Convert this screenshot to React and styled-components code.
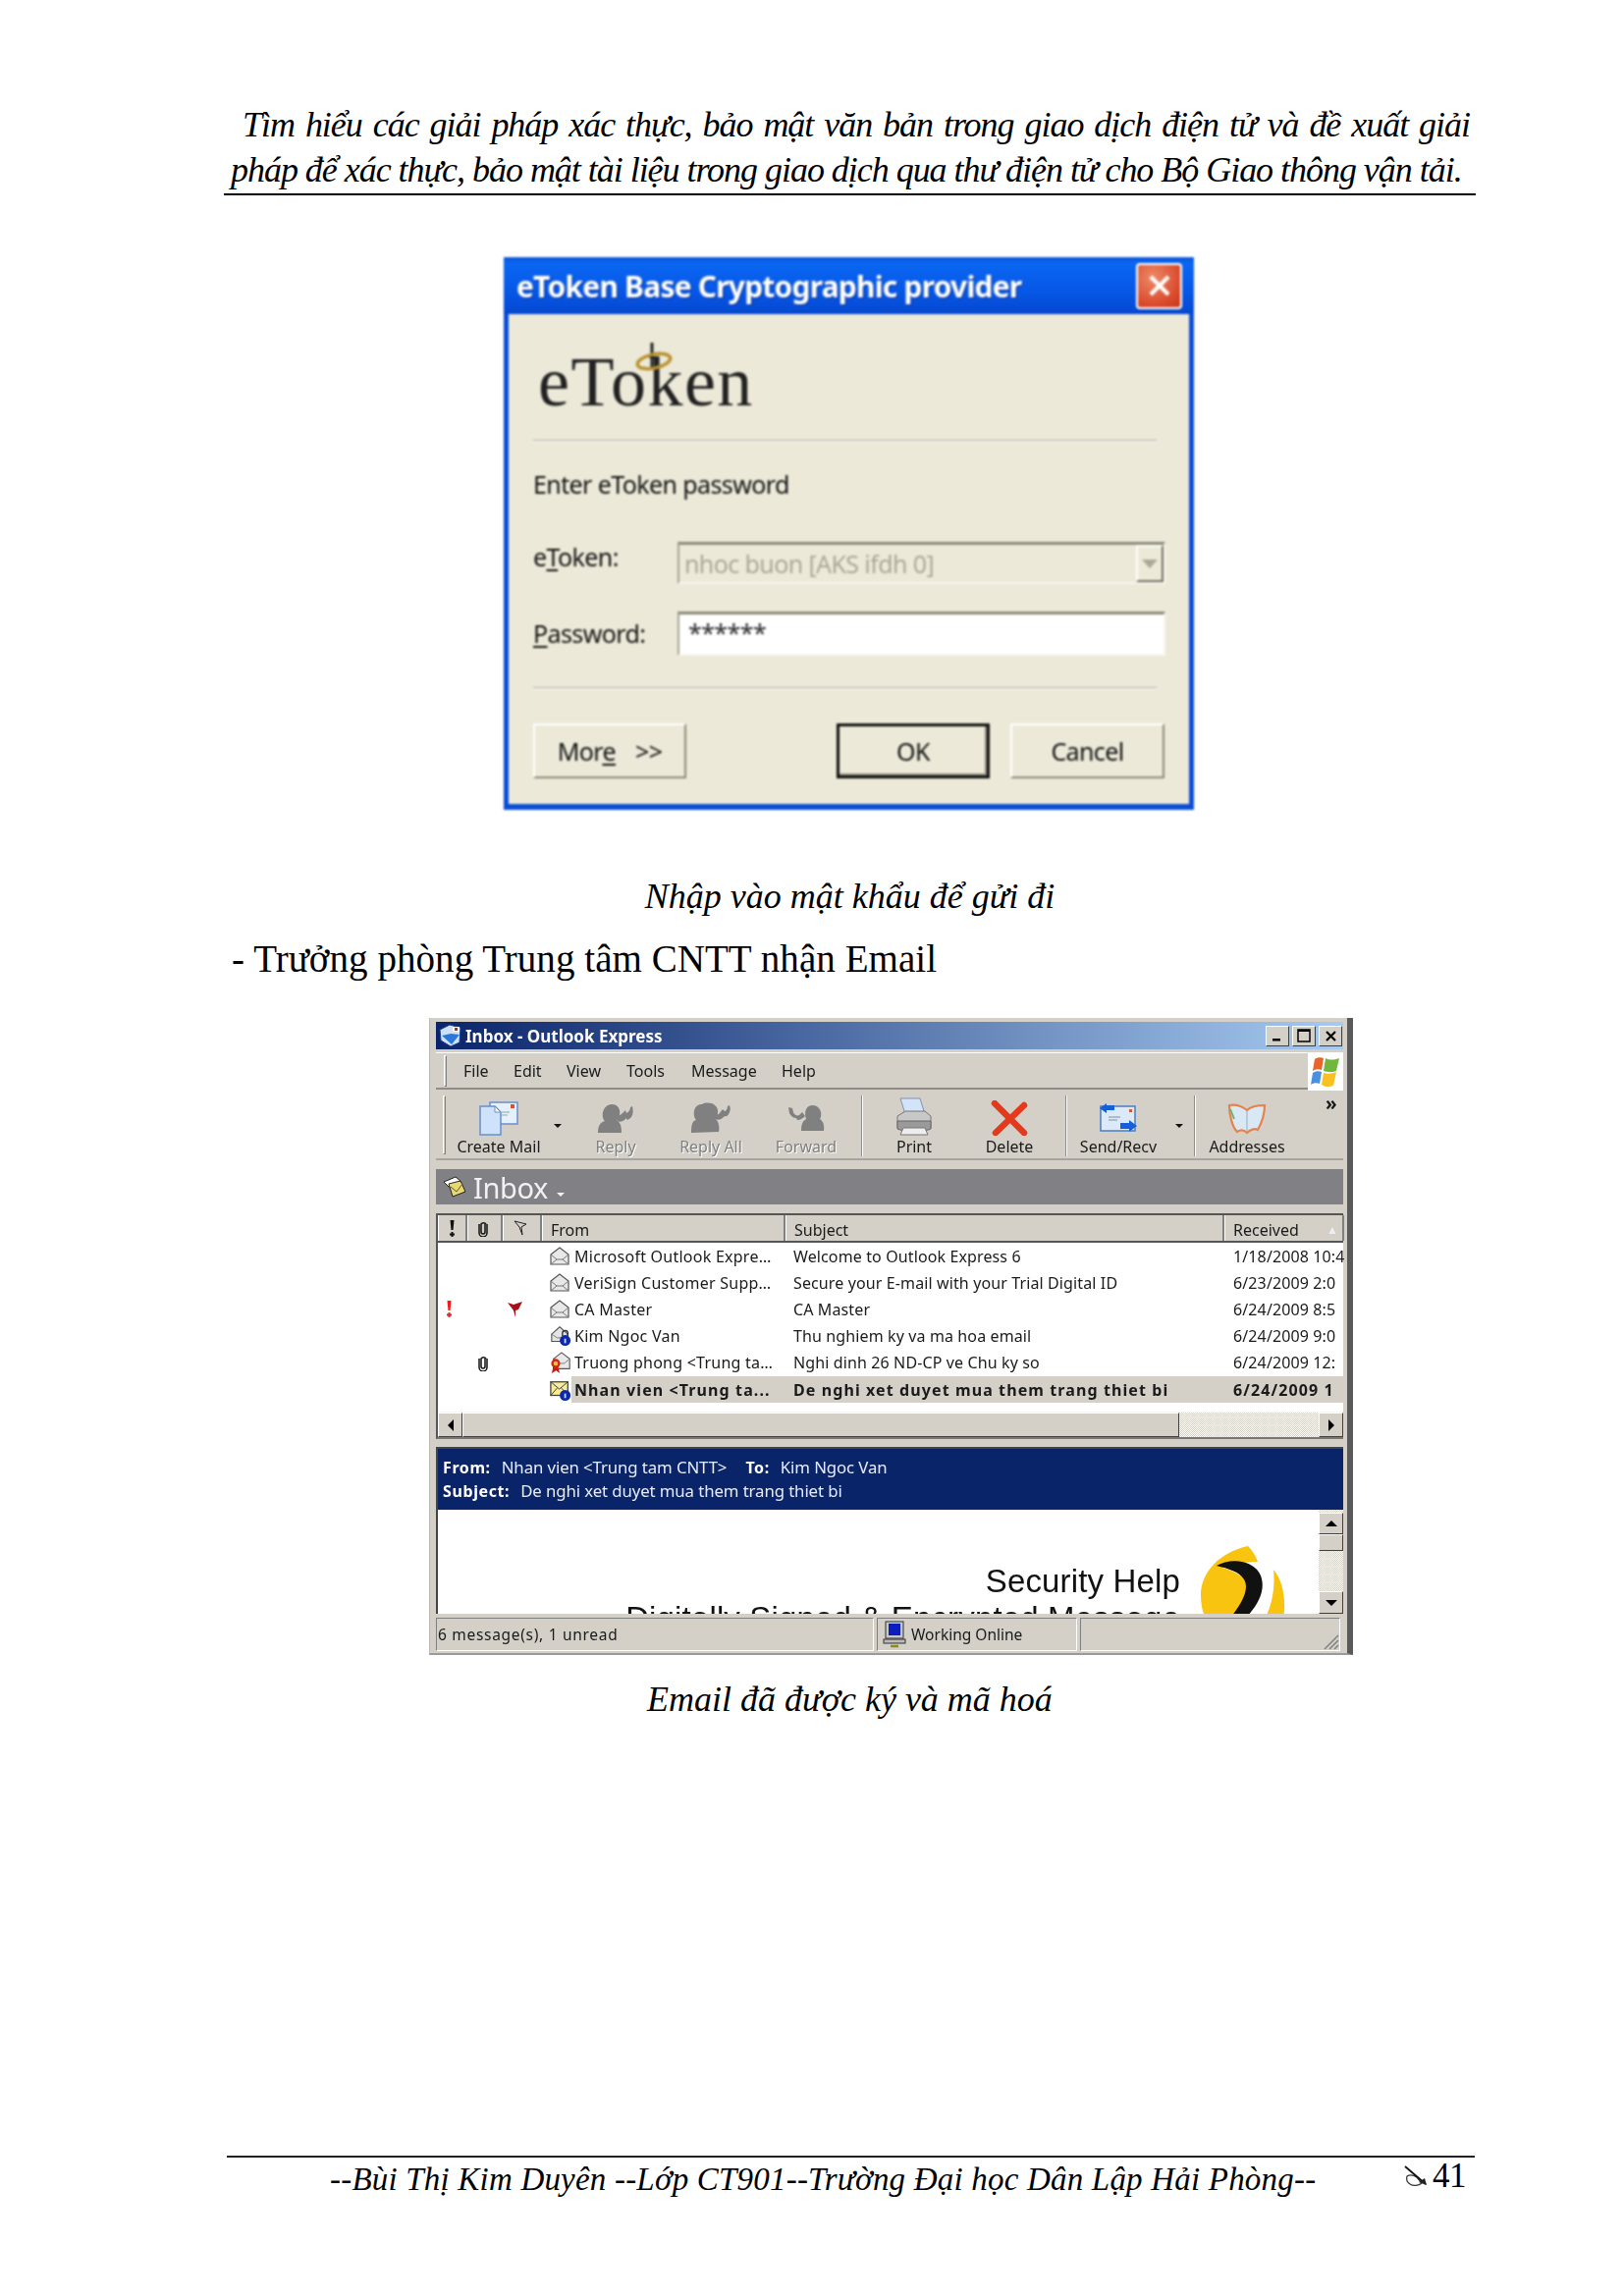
import React from "react";
import styled, { createGlobalStyle } from "styled-components";

const SERIF = `"Liberation Serif", "Times New Roman", serif`;
const UI = `"Noto Sans", Tahoma, sans-serif`;
const FACE = "#d4d0c8";
const XP_FACE = "#ece9d8";

const GlobalStyle = createGlobalStyle`
  html, body { margin: 0; padding: 0; background: #fff; }
  * { box-sizing: border-box; }
`;

const Page = styled.div`
  width: 1654px;
  height: 2339px;
  padding: 104px 151px 0 228px;
  display: flex;
  flex-direction: column;
  font-family: ${SERIF};
  color: #000;
  overflow: hidden;
`;

const HeaderLine = styled.div`
  margin-left: ${(p) => p.$indent}px;
  width: ${(p) => p.$width}px;
  font-size: 36px;
  font-style: italic;
  line-height: 46px;
  letter-spacing: -1.03px;
  white-space: nowrap;
  text-align: justify;
  text-align-last: justify;
`;

const HeaderRule = styled.div`
  margin-top: 1px;
  height: 2px;
  background: #000;
`;

/* ---------- eToken dialog ---------- */

const Dialog = styled.div`
  margin: 63px 0 0 285px;
  width: 703px;
  height: 563px;
  display: flex;
  flex-direction: column;
  padding: 0 5px 6px;
  background: #0b4ed6;
  filter: blur(0.8px);
`;

const DialogTitle = styled.div`
  margin: 0 -5px;
  height: 58px;
  flex: none;
  padding: 0 12px 0 13px;
  display: flex;
  align-items: center;
  justify-content: space-between;
  background: linear-gradient(180deg, #0a57dc 0%, #0a66f2 12%, #0757e6 60%, #0548d0 100%);
  color: #fff;
  font-family: ${UI};
  font-weight: 700;
  font-size: 30px;
  letter-spacing: -0.8px;
  text-shadow: 1px 1px 1px #0a2f90;
`;

const DialogClose = styled.div`
  width: 47px;
  height: 47px;
  border: 2px solid #fff;
  border-radius: 4px;
  background: radial-gradient(circle at 35% 30%, #ec8a68, #d9482a 70%, #c23a1e);
  display: flex;
  align-items: center;
  justify-content: center;
`;

const DialogBody = styled.div`
  flex: 1;
  background: ${XP_FACE};
  padding: 33px 24px 0 25px;
  font-family: ${UI};
  font-size: 25px;
  letter-spacing: -0.6px;
  color: #111;
`;

const Logo = styled.div`
  position: relative;
  margin-left: 5px;
  width: 230px;
  height: 72px;
  font-family: ${SERIF};
  font-size: 72px;
  line-height: 72px;
  letter-spacing: 1.5px;
  color: #222;
  white-space: nowrap;
`;

const LogoRing = styled.svg`
  position: absolute;
  left: 96px;
  top: -5px;
`;

const Divider = styled.div`
  margin-top: ${(p) => p.$top}px;
  height: 2px;
  background: #aca899;
  border-bottom: 1px solid #fff;
  width: 635px;
`;

const Prompt = styled.div`
  margin-top: 28px;
  height: 30px;
  line-height: 30px;
`;

const FieldRow = styled.div`
  margin-top: ${(p) => p.$top}px;
  height: ${(p) => p.$height}px;
  display: grid;
  grid-template-columns: 147px 1fr;
  grid-template-rows: ${(p) => p.$height}px;
  align-items: center;
`;

const FieldLabel = styled.span`
  margin-top: -${(p) => p.$raise || 0}px;
`;

const Mnemonic = styled.span`
  text-decoration: underline;
  text-underline-offset: 3px;
  text-decoration-thickness: 2px;
`;

const SunkenField = styled.div`
  height: 100%;
  display: flex;
  align-items: ${(p) => (p.$password ? "flex-start" : "center")};
  justify-content: space-between;
  padding-left: ${(p) => (p.$password ? 9 : 5)}px;
  padding-top: ${(p) => (p.$password ? 3 : 0)}px;
  background: ${(p) => (p.$password ? "#fff" : XP_FACE)};
  border-top: 3px solid #8d8a78;
  border-left: 2px solid #a7a493;
  border-right: 2px solid #f8f7f0;
  border-bottom: 2px solid #f8f7f0;
  color: ${(p) => (p.$password ? "#222" : "#aca899")};
  line-height: 30px;
`;

const ComboArrow = styled.div`
  width: 28px;
  height: 100%;
  border: 2px solid;
  border-color: #fff #716f64 #716f64 #fff;
  display: flex;
  align-items: center;
  justify-content: center;
  &::after {
    content: "";
    border-left: 8px solid transparent;
    border-right: 8px solid transparent;
    border-top: 9px solid #aca899;
  }
`;

const ButtonRow = styled.div`
  margin-top: 35px;
  display: flex;
`;

const DialogButton = styled.div`
  width: ${(p) => p.$width}px;
  height: 56px;
  margin-left: ${(p) => p.$left || 0}px;
  display: flex;
  align-items: center;
  justify-content: center;
  gap: 20px;
  background: ${XP_FACE};
  border: ${(p) => (p.$default ? "3px solid #111" : "2px solid")};
  border-color: ${(p) => (p.$default ? "#111" : "#fff #8d8a78 #8d8a78 #fff")};
  box-shadow: ${(p) => (p.$default ? "inset -2px -2px 0 #8d8a78" : "none")};
`;

const Caption = styled.div`
  margin-top: ${(p) => p.$top}px;
  text-align: center;
  font-size: 36px;
  font-style: italic;
  line-height: 44px;
`;

const BodyLine = styled.div`
  margin: 19px 0 0 8px;
  font-size: 39px;
  letter-spacing: 0.05px;
  line-height: 46px;
`;

/* ---------- Outlook window ---------- */

const Window = styled.div`
  margin: 37px 0 0 209px;
  width: 941px;
  height: 649px;
  padding: 4px 4px 3px 6px;
  display: flex;
  flex-direction: column;
  background: ${FACE};
  border-right: 6px solid #5a5a5a;
  border-bottom: 2px solid #9a9a9a;
  border-left: 1px solid #bbb;
  font-family: ${UI};
  font-size: 16px;
  color: #1a1a1a;
  filter: blur(0.5px);
`;

const WinTitle = styled.div`
  height: 28px;
  flex: none;
  display: flex;
  align-items: center;
  padding: 0 1px 0 3px;
  background: linear-gradient(90deg, #0a246a, #a6caf0);
  color: #fff;
  font-weight: 700;
  font-size: 17px;
`;

const WinTitleText = styled.span`
  margin-left: 3px;
  flex: 1;
`;

const WinButton = styled.div`
  width: 24px;
  height: 21px;
  margin-left: 3px;
  background: ${FACE};
  border: 1px solid;
  border-color: #fff #404040 #404040 #fff;
  display: flex;
  align-items: center;
  justify-content: center;
`;

const MenuBar = styled.div`
  margin-top: 3px;
  height: 38px;
  flex: none;
  display: flex;
  align-items: center;
  border-top: 1px solid #fff;
  border-bottom: 2px solid #8f8d86;
`;

const GripBar = styled.div`
  width: 3px;
  height: ${(p) => p.$height}px;
  margin-left: ${(p) => p.$left}px;
  flex: none;
  border: 1px solid;
  border-color: #fff #808080 #808080 #fff;
`;

const MenuItem = styled.span`
  margin-left: ${(p) => p.$left}px;
  width: ${(p) => p.$width}px;
  flex: none;
`;

const FlagBox = styled.div`
  margin-left: auto;
  width: 36px;
  height: 38px;
  margin-top: 2px;
  background: #fff;
  display: flex;
  align-items: center;
  justify-content: center;
`;

const ToolBar = styled.div`
  margin-top: 2px;
  height: 70px;
  flex: none;
  display: flex;
  border-bottom: 2px solid #a8a59e;
`;

const ToolGrip = styled(GripBar)`
  margin-top: 4px;
`;

const ToolButton = styled.div`
  width: ${(p) => p.$width}px;
  flex: none;
  display: flex;
  flex-direction: column;
  align-items: center;
  padding-top: 8px;
  color: ${(p) => (p.$disabled ? "#808080" : "#1a1a1a")};
  text-shadow: ${(p) => (p.$disabled ? "1px 1px 0 #fff" : "none")};
`;

const ToolIcon = styled.div`
  height: 38px;
  display: flex;
  align-items: center;
  justify-content: center;
`;

const ToolLabel = styled.div`
  line-height: 20px;
  white-space: nowrap;
`;

const ToolArrow = styled.div`
  width: ${(p) => p.$width}px;
  flex: none;
  padding: 33px 0 0 ${(p) => p.$pad}px;
  &::after {
    content: "";
    display: block;
    width: 0;
    border-left: 4px solid transparent;
    border-right: 4px solid transparent;
    border-top: 4px solid #111;
  }
`;

const ToolSep = styled.div`
  width: 2px;
  height: 62px;
  margin: 4px 0 0 ${(p) => p.$left}px;
  flex: none;
  border-left: 1px solid #8f8d86;
  border-right: 1px solid #fff;
`;

const Chevrons = styled.div`
  margin: 2px 0 0 28px;
  font-weight: 700;
  font-size: 19px;
  line-height: 20px;
`;

const FolderBand = styled.div`
  margin-top: 9px;
  height: 36px;
  flex: none;
  display: flex;
  align-items: center;
  padding-left: 7px;
  background: #818084;
  color: #f2f2f2;
  font-size: 29px;
  letter-spacing: -0.4px;
`;

const FolderText = styled.span`
  margin-left: 7px;
`;

const FolderArrow = styled.span`
  margin: 15px 0 0 9px;
  border-left: 4px solid transparent;
  border-right: 4px solid transparent;
  border-top: 4px solid #f2f2f2;
`;

const ListFrame = styled.div`
  margin-top: 9px;
  height: 230px;
  flex: none;
  background: #fff;
  border-top: 2px solid #555;
  border-left: 2px solid #555;
  border-bottom: 2px solid #777;
  display: flex;
  flex-direction: column;
`;

const COLUMNS = "30px 36px 40px 248px 447px 122px";

const ListHeader = styled.div`
  height: 28px;
  flex: none;
  display: grid;
  grid-template-columns: ${COLUMNS};
  border-bottom: 2px solid #555;
  background: ${FACE};
`;

const HeaderCell = styled.div`
  display: flex;
  align-items: center;
  justify-content: ${(p) => (p.$center ? "center" : "flex-start")};
  padding: ${(p) => (p.$center ? `0 ${p.$nudge || 0}px 0 0` : "3px 0 0 8px")};
  border-left: 1px solid #fff;
  border-right: 2px solid #808080;
`;

const SortMark = styled.span`
  margin-left: auto;
  margin-right: 4px;
  color: #eee;
  font-size: 12px;
`;

const ListBody = styled.div`
  flex: 1;
`;

const Row = styled.div`
  height: 27.2px;
  display: grid;
  grid-template-columns: ${COLUMNS};
  font-weight: ${(p) => (p.$unread ? 700 : 400)};
  letter-spacing: ${(p) => (p.$unread ? "1.1px" : "0.12px")};
`;

const MarkCell = styled.div`
  display: flex;
  align-items: center;
  justify-content: ${(p) => p.$justify || "center"};
  padding: 0 ${(p) => p.$right || 0}px 0 ${(p) => p.$pad || 0}px;
`;

const FromCell = styled.div`
  display: flex;
  align-items: center;
  padding-left: 10px;
  min-width: 0;
  letter-spacing: ${(p) => (p.$unread ? "1.1px" : "0.25px")};
`;

const RowIcon = styled.div`
  width: 22px;
  margin-left: -2px;
  flex: none;
  display: flex;
`;

const RowText = styled.div`
  height: 100%;
  flex: 1;
  min-width: 0;
  display: flex;
  align-items: center;
  padding-left: ${(p) => p.$pad || 0}px;
  white-space: nowrap;
  overflow: hidden;
  background: ${(p) => (p.$selected ? FACE : "transparent")};
`;

const HScroll = styled.div`
  height: 26px;
  flex: none;
  display: flex;
  border-top: 1px solid #f4f4f4;
  background: repeating-conic-gradient(${FACE} 0 25%, #fff 0 50%) 0 0 / 2px 2px;
`;

const ScrollPart = styled.div`
  width: ${(p) => p.$width || 25}px;
  height: ${(p) => (p.$height ? `${p.$height}px` : "100%")};
  flex: none;
  background: ${FACE};
  border: 1px solid;
  border-color: #fff #404040 #404040 #fff;
  display: flex;
  align-items: center;
  justify-content: center;
`;

const Triangle = styled.span`
  width: 0;
  height: 0;
  ${(p) =>
    p.$dir === "left"
      ? "border-top: 6px solid transparent; border-bottom: 6px solid transparent; border-right: 6px solid #000;"
      : p.$dir === "right"
      ? "border-top: 6px solid transparent; border-bottom: 6px solid transparent; border-left: 6px solid #000;"
      : p.$dir === "up"
      ? "border-left: 6px solid transparent; border-right: 6px solid transparent; border-bottom: 6px solid #000;"
      : "border-left: 6px solid transparent; border-right: 6px solid transparent; border-top: 6px solid #000;"}
`;

const ScrollFill = styled.div`
  flex: 1;
`;

const PreviewHead = styled.div`
  margin-top: 8px;
  height: 64px;
  flex: none;
  padding: 7px 0 0 5px;
  background: #0a246a;
  border-top: 2px solid #444;
  border-left: 2px solid #444;
  color: #e8ecf8;
  font-size: 16.8px;
  letter-spacing: -0.1px;
  line-height: 24px;
`;

const PreviewKey = styled.b`
  color: #fff;
  font-size: 16px;
  letter-spacing: 0.6px;
  margin: ${(p) => (p.$spaced ? "0 0 0 19px" : "0")};
`;

const PreviewValue = styled.span`
  margin-left: 11px;
`;

const PreviewBody = styled.div`
  height: 106px;
  flex: none;
  display: flex;
  background: #fff;
  border-left: 2px solid #444;
  overflow: hidden;
`;

const MailContent = styled.div`
  flex: 1;
  display: flex;
  justify-content: flex-end;
  padding-right: 31px;
  min-width: 0;
`;

const MailHeading = styled.div`
  padding-top: 54px;
  margin-right: 21px;
  text-align: right;
  white-space: nowrap;
  font-family: "Liberation Sans", Arial, sans-serif;
  font-size: 33px;
  letter-spacing: 0.15px;
  line-height: 38px;
  color: #111;
`;

const MailLogo = styled.svg`
  margin-top: 37px;
  flex: none;
`;

const VScroll = styled.div`
  width: 25px;
  flex: none;
  display: flex;
  flex-direction: column;
  background: repeating-conic-gradient(${FACE} 0 25%, #fff 0 50%) 0 0 / 2px 2px;
  padding-top: 3px;
`;

const VGap = styled.div`
  height: ${(p) => p.$height}px;
  flex: none;
`;

const StatusBar = styled.div`
  margin-top: 4px;
  height: 34px;
  flex: none;
  display: flex;
  font-size: 15.5px;
`;

const StatusPanel = styled.div`
  width: ${(p) => (p.$width ? `${p.$width}px` : "auto")};
  flex: ${(p) => (p.$width ? "none" : 1)};
  display: flex;
  align-items: center;
  gap: 5px;
  padding-left: ${(p) => p.$pad || 1}px;
  letter-spacing: ${(p) => p.$spacing || 0}px;
  border: 1px solid;
  border-color: #808080 #fff #fff #808080;
  margin-right: 3px;
  position: relative;
`;

const SizeGrip = styled.svg`
  position: absolute;
  right: 0;
  bottom: 0;
`;

/* ---------- footer ---------- */

const Footer = styled.div`
  margin: auto 0 97px 3px;
  width: 1271px;
`;

const FooterRule = styled.div`
  height: 2px;
  background: #222;
`;

const FooterRow = styled.div`
  display: flex;
  align-items: center;
  padding: 0 9px 0 105px;
  height: 44px;
`;

const FooterText = styled.div`
  font-size: 33px;
  font-style: italic;
  letter-spacing: 0.2px;
  white-space: nowrap;
`;

const PageNumber = styled.div`
  margin-left: auto;
  display: flex;
  align-items: center;
  gap: 3px;
  font-size: 35px;
  letter-spacing: -0.5px;
  margin-top: -6px;
`;

/* ---------- drawings ---------- */

const CreateMailIcon = () => (
  <svg width="42" height="36" viewBox="0 0 42 36">
    <rect x="12" y="2" width="28" height="22" fill="#e6f0fb" stroke="#6a8fc8" strokeWidth="1.5" />
    <path d="M24 12h8M24 15h6" stroke="#8aa" />
    <rect x="33" y="4" width="4" height="4" fill="#d85030" />
    <path d="M2 6h15l6 6v23H2z" fill="#cfe2fb" stroke="#6a8fc8" strokeWidth="1.5" />
    <path d="M17 6v6h6z" fill="#fff" stroke="#6a8fc8" />
  </svg>
);

const ReplyIcon = () => (
  <svg width="40" height="34" viewBox="0 0 40 34">
    <path d="M2 32c0-8 3-11 7-12-4-4-3-16 7-17 8 0 10 8 7 13-1 2-2 3-1 4 3 2 4 6 4 12z" fill="#808080" />
    <path d="M22 20c4 2 7-1 9-3 0 3 2 2 5-1 2-3 2-7 1-11l-2 1c0 3-2 5-4 6l-1-3-4 4-4 2z" fill="#808080" />
  </svg>
);

const ReplyAllIcon = () => (
  <svg width="44" height="34" viewBox="0 0 44 34">
    <path d="M2 32c0-8 1-12 5-13-4-5-3-16 6-16 3-2 10-2 13 1 5 4 3 10 1 14 3 3 4 8 3 13z" fill="#808080" />
    <path d="M27 18c4 2 7-1 9-3 2 1 4-1 5-4 1-2 1-4 0-7l-2 1c0 3-2 5-3 5l-2-2-4 5-4 1z" fill="#808080" />
  </svg>
);

const ForwardIcon = () => (
  <svg width="40" height="30" viewBox="0 0 40 30">
    <path d="M38 28c1-6-1-10-4-12 3-4 1-14-7-14s-9 8-7 14c-4 2-5 7-5 12z" fill="#808080" />
    <path d="M2 4l1 6c2 4 5 5 7 5l1 2c3 0 6-2 8-4l-3-4-3 3c-2 1-5 0-6-3l-1-4z" fill="#808080" />
  </svg>
);

const PrintIcon = () => (
  <svg width="40" height="42" viewBox="0 0 40 42">
    <path d="M6 1h20l5 16H11z" fill="#d4e4f8" stroke="#7f93b0" />
    <path d="M3 19l8-5h20l6 5v12H3z" fill="#c8c8c8" stroke="#777" />
    <path d="M3 24h34v8c-4 3-30 3-34 0z" fill="#9a9a9a" stroke="#666" />
    <path d="M9 31h22l3 7H6z" fill="#eee" stroke="#777" />
  </svg>
);

const DeleteIcon = () => (
  <svg width="38" height="36" viewBox="0 0 38 36">
    <path d="M4 3l30 30M34 5L5 33" stroke="#e5391c" strokeWidth="6.5" strokeLinecap="round" />
  </svg>
);

const SendRecvIcon = () => (
  <svg width="40" height="30" viewBox="0 0 40 30">
    <rect x="2" y="3" width="35" height="25" fill="#dce9f8" stroke="#4c7cc0" strokeWidth="1.5" />
    <path d="M16 2h-8V0L1 5l7 5V7h8z" fill="#1560d8" />
    <path d="M22 20h9v-3l8 6-8 6v-3h-9z" fill="#1560d8" />
    <path d="M10 14h12M10 17h9" stroke="#7a8fa8" />
    <rect x="31" y="6" width="3" height="3" fill="#c86040" />
  </svg>
);

const AddressesIcon = () => (
  <svg width="40" height="34" viewBox="0 0 40 34">
    <path d="M20 9C15 5 8 3 2 4c0 10 3 22 8 27 3-2 7-2 10 1 3-3 8-5 11-3 4-7 7-17 7-25-7 0-14 1-18 5z" fill="#d8e8f4" stroke="#e8824a" strokeWidth="2.2" />
    <path d="M20 9v22" stroke="#9ab" />
    <path d="M3 8l4 10" stroke="#6cb46c" strokeWidth="2" />
  </svg>
);

const FlagLogo = () => (
  <svg width="32" height="34" viewBox="0 0 32 34">
    <path d="M5 4c3-2 6-2 9-1l-2 12c-3-1-6-1-9 1z" fill="#e8642c" />
    <path d="M16 3c4 2 8 2 14 0l-3 13c-5 2-9 1-13 0z" fill="#70b83c" />
    <path d="M3 18c3-2 6-2 9-1l-2 12c-3-1-6-1-9 1z" fill="#4a90e0" />
    <path d="M14 18c4 1 8 1 13-1l-3 14c-5 2-9 1-12-1z" fill="#f8c020" />
  </svg>
);

const OpenMail = ({ fill = "#e8e8e8" }) => (
  <svg width="20" height="20" viewBox="0 0 20 20">
    <path d="M1 8l9-7 9 7v10H1z" fill={fill} stroke="#555" strokeWidth="1.2" />
    <path d="M1 8l6 5h6l6-5M1 18l6-5M19 18l-6-5" fill="none" stroke="#777" />
  </svg>
);

const LockBadge = () => (
  <svg width="24" height="24" viewBox="0 0 24 24">
    <path d="M2 10l9-8 9 8v8H2z" fill="#e4e4e4" stroke="#555" strokeWidth="1.2" />
    <path d="M2 10l6 4h6l6-4" fill="none" stroke="#777" />
    <path d="M14 12v-3a3 3 0 0 1 6 0v3" fill="none" stroke="#333" strokeWidth="1.5" />
    <circle cx="17" cy="17" r="6" fill="#0a28b0" />
    <rect x="16" y="15" width="2" height="5" fill="#cde" />
  </svg>
);

const CertMail = () => (
  <svg width="24" height="24" viewBox="0 0 24 24">
    <path d="M4 8l9-7 9 7v11H4z" fill="#e8e8e8" stroke="#555" strokeWidth="1.2" />
    <path d="M4 8l6 5h6l6-5" fill="none" stroke="#777" />
    <path d="M2 24l2-8h5l2 8-4-3z" fill="#c02010" />
    <circle cx="6.5" cy="13" r="5" fill="#d02818" />
    <circle cx="6.5" cy="13" r="2.5" fill="#f0c040" />
  </svg>
);

const UnreadMail = () => (
  <svg width="24" height="24" viewBox="0 0 24 24">
    <rect x="1" y="3" width="19" height="15" fill="#f8ec98" stroke="#444" strokeWidth="1.4" />
    <path d="M1 3l9.5 8L20 3M1 18l7-8M20 18l-7-8" fill="none" stroke="#333" />
    <circle cx="17" cy="18" r="6" fill="#0a28b0" />
    <rect x="16" y="16" width="2" height="5" fill="#cde" />
  </svg>
);

const PaperClip = () => (
  <svg width="10" height="17" viewBox="0 0 10 17">
    <path d="M7 4v8a2 2 0 0 1-4 0V4a3 3 0 0 1 5 0M9 4v9a4 4 0 0 1-8 0V4" fill="none" stroke="#111" strokeWidth="1.5" />
  </svg>
);

const HeaderFlag = () => (
  <svg width="14" height="16" viewBox="0 0 14 16">
    <path d="M1 1l12 3-5 3 1 8L6 7z" fill="none" stroke="#222" />
  </svg>
);

const RedFlag = () => (
  <svg width="18" height="18" viewBox="0 0 18 18">
    <path d="M1 2l6 2 9-3-4 8-3 1 0 7-2-7z" fill="#a80f18" />
  </svg>
);

const Exclaim = ({ color }) => (
  <svg width="7" height="19" viewBox="0 0 7 19">
    <path d="M1.5 1h4L4.5 11h-2z" fill={color} />
    <path d="M3.5 13v5M1 15.5h5" stroke={color} strokeWidth="2" />
  </svg>
);

const FolderIcon = () => (
  <svg width="24" height="24" viewBox="0 0 24 24">
    <path d="M1 7l12-5 5 4-12 6z" fill="#fff" stroke="#222" />
    <path d="M6 9l12-3 5 11-13 5z" fill="#e8d870" stroke="#222" />
    <path d="M8 12l6 5 6-8" fill="none" stroke="#555" />
  </svg>
);

const OutlookIcon = () => (
  <svg width="24" height="24" viewBox="0 0 24 24">
    <path d="M1 6l10-5 11 3-1 15-9 4-10-6z" fill="#d0e0f4" stroke="#1c3c8c" />
    <path d="M3 12l9-2 9 1-8 10z" fill="#2a78d8" />
    <rect x="14" y="3" width="7" height="5" fill="#fff" />
    <rect x="16" y="4" width="3" height="3" fill="#c02818" />
  </svg>
);

const ComputerIcon = () => (
  <svg width="24" height="28" viewBox="0 0 24 28">
    <rect x="3" y="1" width="18" height="17" fill="#c8c8c8" stroke="#333" />
    <rect x="6" y="3" width="12" height="12" fill="#0a1ec0" />
    <rect x="1" y="19" width="22" height="4" fill="#bbb" stroke="#333" />
    <path d="M8 26h8" stroke="#8a8a20" strokeWidth="2.5" />
  </svg>
);

const WritingHand = () => (
  <svg width="26" height="22" viewBox="0 0 26 22">
    <path d="M3 11c3-2 7-1 10 1l5 6c-3 3-9 3-12 1-3-2-4-5-3-8z" fill="none" stroke="#333" strokeWidth="1.2" />
    <path d="M1 1l21 18" stroke="#111" strokeWidth="1.8" />
    <path d="M15 17l8 3-2-7z" fill="#222" />
  </svg>
);

const TOOL_ITEMS = [
  { kind: "grip" },
  { kind: "button", width: 108, label: "Create Mail", icon: <CreateMailIcon /> },
  { kind: "arrow", width: 16, pad: 2 },
  { kind: "button", width: 98, label: "Reply", icon: <ReplyIcon />, disabled: true },
  { kind: "button", width: 96, label: "Reply All", icon: <ReplyAllIcon />, disabled: true },
  { kind: "button", width: 98, label: "Forward", icon: <ForwardIcon />, disabled: true },
  { kind: "sep", left: 7 },
  { kind: "button", width: 104, label: "Print", icon: <PrintIcon /> },
  { kind: "button", width: 90, label: "Delete", icon: <DeleteIcon /> },
  { kind: "sep", left: 12 },
  { kind: "button", width: 104, label: "Send/Recv", icon: <SendRecvIcon /> },
  { kind: "arrow", width: 25, pad: 6 },
  { kind: "sep", left: 0 },
  { kind: "button", width: 104, label: "Addresses", icon: <AddressesIcon /> },
];

const MENU_ITEMS = [
  { label: "File", left: 17, width: 51 },
  { label: "Edit", left: 0, width: 54 },
  { label: "View", left: 0, width: 61 },
  { label: "Tools", left: 0, width: 66 },
  { label: "Message", left: 0, width: 92 },
  { label: "Help", left: 0, width: 40 },
];

const MESSAGES = [
  { from: "Microsoft Outlook Expre…", subject: "Welcome to Outlook Express 6", received: "1/18/2008 10:4", icon: <OpenMail /> },
  { from: "VeriSign Customer Supp…", subject: "Secure your E-mail with your Trial Digital ID", received: "6/23/2009 2:0", icon: <OpenMail /> },
  { from: "CA Master", subject: "CA Master", received: "6/24/2009 8:5", icon: <OpenMail />, priority: true, flagged: true },
  { from: "Kim Ngoc Van", subject: "Thu nghiem ky va ma hoa email", received: "6/24/2009 9:0", icon: <LockBadge /> },
  { from: "Truong phong <Trung ta…", subject: "Nghi dinh 26 ND-CP ve Chu ky so", received: "6/24/2009 12:", icon: <CertMail />, attachment: true },
  { from: "Nhan vien <Trung ta...", subject: "De nghi xet duyet mua them trang thiet bi", received: "6/24/2009 1", icon: <UnreadMail />, unread: true },
];

const EtokenDialog = () => (
  <Dialog>
    <DialogTitle>
      <span>eToken Base Cryptographic provider</span>
      <DialogClose>
        <svg width="26" height="26" viewBox="0 0 26 26">
          <path d="M4 4l18 18M22 4L4 22" stroke="#fff" strokeWidth="4" />
        </svg>
      </DialogClose>
    </DialogTitle>
    <DialogBody>
      <Logo>
        eToken
        <LogoRing width="44" height="40" viewBox="0 0 44 40">
          <path d="M20 1v26" stroke="#222" strokeWidth="3" />
          <ellipse cx="22" cy="20" rx="17" ry="7" fill="none" stroke="#b8922c" strokeWidth="3.5" transform="rotate(-12 22 20)" />
        </LogoRing>
      </Logo>
      <Divider $top={23} />
      <Prompt>Enter eToken password</Prompt>
      <FieldRow $top={44} $height={43}>
        <FieldLabel $raise={14}>
          e<Mnemonic>T</Mnemonic>oken:
        </FieldLabel>
        <SunkenField>
          <span>nhoc buon [AKS ifdh 0]</span>
          <ComboArrow />
        </SunkenField>
      </FieldRow>
      <FieldRow $top={28} $height={45}>
        <FieldLabel $raise={2}>
          <Mnemonic>P</Mnemonic>assword:
        </FieldLabel>
        <SunkenField $password>******</SunkenField>
      </FieldRow>
      <Divider $top={32} />
      <ButtonRow>
        <DialogButton $width={156}>
          <span>
            Mor<Mnemonic>e</Mnemonic>
          </span>
          <span>&gt;&gt;</span>
        </DialogButton>
        <DialogButton $width={156} $left={153} $default>
          OK
        </DialogButton>
        <DialogButton $width={157} $left={21}>
          Cancel
        </DialogButton>
      </ButtonRow>
    </DialogBody>
  </Dialog>
);

const OutlookWindow = () => (
  <Window>
    <WinTitle>
      <OutlookIcon />
      <WinTitleText>Inbox - Outlook Express</WinTitleText>
      <WinButton>
        <svg width="12" height="12" viewBox="0 0 12 12">
          <rect x="1" y="9" width="8" height="2.5" fill="#000" />
        </svg>
      </WinButton>
      <WinButton>
        <svg width="14" height="14" viewBox="0 0 14 14">
          <rect x="1" y="1" width="12" height="12" fill="none" stroke="#000" strokeWidth="1.5" />
          <path d="M1 2h12" stroke="#000" strokeWidth="2" />
        </svg>
      </WinButton>
      <WinButton>
        <svg width="13" height="13" viewBox="0 0 13 13">
          <path d="M2 2l9 9M11 2l-9 9" stroke="#000" strokeWidth="2.2" />
        </svg>
      </WinButton>
    </WinTitle>
    <MenuBar>
      <GripBar $left={8} $height={32} />
      {MENU_ITEMS.map((m) => (
        <MenuItem key={m.label} $left={m.left} $width={m.width}>
          {m.label}
        </MenuItem>
      ))}
      <FlagBox>
        <FlagLogo />
      </FlagBox>
    </MenuBar>
    <ToolBar>
      {TOOL_ITEMS.map((t, i) => {
        if (t.kind === "grip") return <ToolGrip key={i} $left={7} $height={60} />;
        if (t.kind === "sep") return <ToolSep key={i} $left={t.left} />;
        if (t.kind === "arrow") return <ToolArrow key={i} $width={t.width} $pad={t.pad} />;
        return (
          <ToolButton key={i} $width={t.width} $disabled={t.disabled}>
            <ToolIcon>{t.icon}</ToolIcon>
            <ToolLabel>{t.label}</ToolLabel>
          </ToolButton>
        );
      })}
      <Chevrons>»</Chevrons>
    </ToolBar>
    <FolderBand>
      <FolderIcon />
      <FolderText>Inbox</FolderText>
      <FolderArrow />
    </FolderBand>
    <ListFrame>
      <ListHeader>
        <HeaderCell $center>
          <Exclaim color="#111" />
        </HeaderCell>
        <HeaderCell $center $nudge={4}>
          <PaperClip />
        </HeaderCell>
        <HeaderCell $center $nudge={4}>
          <HeaderFlag />
        </HeaderCell>
        <HeaderCell>From</HeaderCell>
        <HeaderCell>Subject</HeaderCell>
        <HeaderCell>
          Received
          <SortMark>▲</SortMark>
        </HeaderCell>
      </ListHeader>
      <ListBody>
        {MESSAGES.map((m) => (
          <Row key={m.from} $unread={m.unread}>
            <MarkCell $justify="flex-start" $pad={8}>
              {m.priority && <Exclaim color="#ee1c1c" />}
            </MarkCell>
            <MarkCell $right={4}>{m.attachment && <PaperClip />}</MarkCell>
            <MarkCell $right={14}>{m.flagged && <RedFlag />}</MarkCell>
            <FromCell $unread={m.unread}>
              <RowIcon>{m.icon}</RowIcon>
              <RowText $selected={m.unread} $pad={3}>
                {m.from}
              </RowText>
            </FromCell>
            <RowText $selected={m.unread} $pad={8}>
              {m.subject}
            </RowText>
            <RowText $selected={m.unread} $pad={9}>
              {m.received}
            </RowText>
          </Row>
        ))}
      </ListBody>
      <HScroll>
        <ScrollPart>
          <Triangle $dir="left" />
        </ScrollPart>
        <ScrollPart $width={730} />
        <ScrollFill />
        <ScrollPart>
          <Triangle $dir="right" />
        </ScrollPart>
      </HScroll>
    </ListFrame>
    <PreviewHead>
      <div>
        <PreviewKey>From:</PreviewKey>
        <PreviewValue>Nhan vien &lt;Trung tam CNTT&gt;</PreviewValue>
        <PreviewKey $spaced>To:</PreviewKey>
        <PreviewValue>Kim Ngoc Van</PreviewValue>
      </div>
      <div>
        <PreviewKey>Subject:</PreviewKey>
        <PreviewValue>De nghi xet duyet mua them trang thiet bi</PreviewValue>
      </div>
    </PreviewHead>
    <PreviewBody>
      <MailContent>
        <MailHeading>
          <div>Security Help</div>
          <div>Digitally Signed &amp; Encrypted Message</div>
        </MailHeading>
        <MailLogo width="89" height="80" viewBox="0 0 89 80">
          <path d="M48 0C20 6 0 26 0 50c0 12 3 22 8 30h30c10-12 16-26 12-38-4-10-14-16-28-20 10-4 24-6 36-6C56 10 52 4 48 0z" fill="#f8c410" />
          <path d="M74 24c10 12 14 32 9 56H62c10-16 14-36 12-56z" fill="#f8c410" />
          <path d="M16 20c14-8 36-6 44 8 8 16-2 36-22 52H24C42 60 50 44 44 34c-5-8-16-11-28-14z" fill="#111" />
        </MailLogo>
      </MailContent>
      <VScroll>
        <ScrollPart $height={22}>
          <Triangle $dir="up" />
        </ScrollPart>
        <ScrollPart $height={17} />
        <VGap $height={41} />
        <ScrollPart $height={23}>
          <Triangle $dir="down" />
        </ScrollPart>
      </VScroll>
    </PreviewBody>
    <StatusBar>
      <StatusPanel $width={446} $spacing={0.7}>
        6 message(s), 1 unread
      </StatusPanel>
      <StatusPanel $width={204} $pad={5}>
        <ComputerIcon />
        Working Online
      </StatusPanel>
      <StatusPanel>
        <SizeGrip width="18" height="18" viewBox="0 0 18 18">
          <path d="M17 3L3 17M17 8L8 17M17 13l-4 4" stroke="#808080" strokeWidth="1.5" />
        </SizeGrip>
      </StatusPanel>
    </StatusBar>
  </Window>
);

const App = () => (
  <Page>
    <GlobalStyle />
    <HeaderLine $indent={19} $width={1250}>
      Tìm hiểu các giải pháp xác thực, bảo mật văn bản trong giao dịch điện tử và đề xuất giải
    </HeaderLine>
    <HeaderLine $indent={7} $width={1252}>
      pháp để xác thực, bảo mật tài liệu trong giao dịch qua thư điện tử cho Bộ Giao thông vận tải.
    </HeaderLine>
    <HeaderRule />
    <EtokenDialog />
    <Caption $top={66}>Nhập vào mật khẩu để gửi đi</Caption>
    <BodyLine>- Trưởng phòng Trung tâm CNTT nhận Email</BodyLine>
    <OutlookWindow />
    <Caption $top={23}>Email đã được ký và mã hoá</Caption>
    <Footer>
      <FooterRule />
      <FooterRow>
        <FooterText>--Bùi Thị Kim Duyên --Lớp CT901--Trường Đại học Dân Lập Hải Phòng--</FooterText>
        <PageNumber>
          <WritingHand />
          41
        </PageNumber>
      </FooterRow>
    </Footer>
  </Page>
);

export default App;
